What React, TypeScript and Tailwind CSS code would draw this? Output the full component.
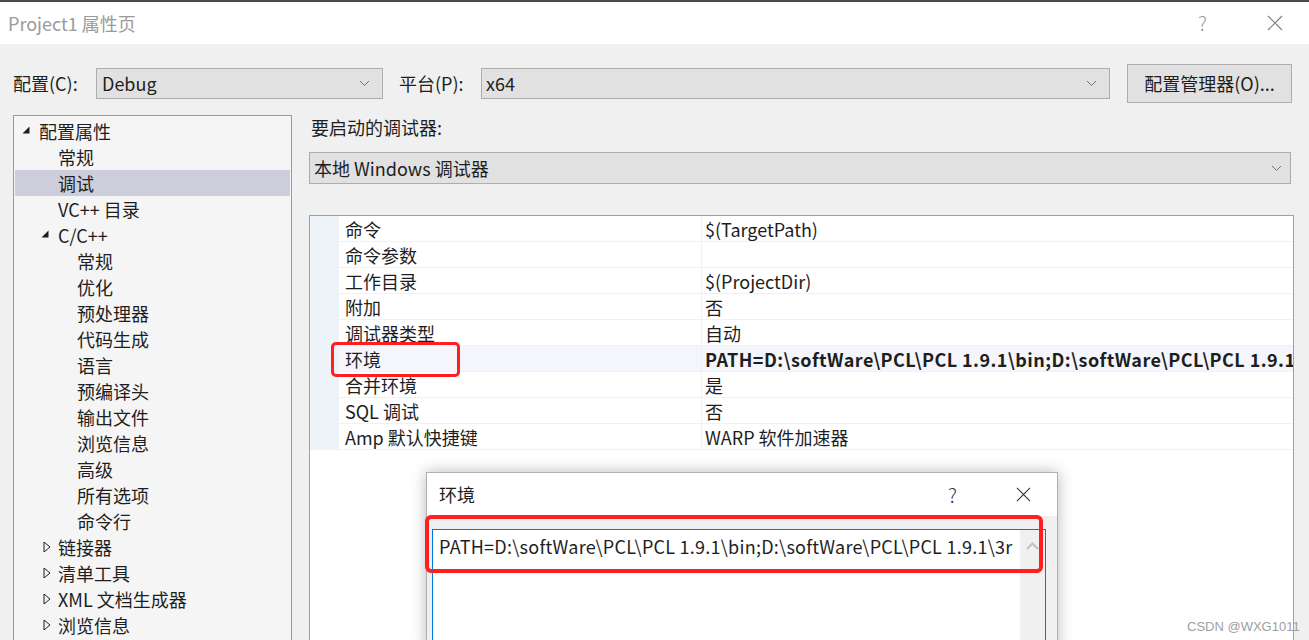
import React from "react"

const font = "font-['Noto_Sans_CJK_SC','Noto_Sans',sans-serif]"

type TreeItem = { label: string; level: 0 | 1 | 2; toggle?: "open" | "closed"; selected?: boolean }

const tree: TreeItem[] = [
  { label: "配置属性", level: 0, toggle: "open" },
  { label: "常规", level: 1 },
  { label: "调试", level: 1, selected: true },
  { label: "VC++ 目录", level: 1 },
  { label: "C/C++", level: 1, toggle: "open" },
  { label: "常规", level: 2 },
  { label: "优化", level: 2 },
  { label: "预处理器", level: 2 },
  { label: "代码生成", level: 2 },
  { label: "语言", level: 2 },
  { label: "预编译头", level: 2 },
  { label: "输出文件", level: 2 },
  { label: "浏览信息", level: 2 },
  { label: "高级", level: 2 },
  { label: "所有选项", level: 2 },
  { label: "命令行", level: 2 },
  { label: "链接器", level: 1, toggle: "closed" },
  { label: "清单工具", level: 1, toggle: "closed" },
  { label: "XML 文档生成器", level: 1, toggle: "closed" },
  { label: "浏览信息", level: 1, toggle: "closed" },
]

const props: { name: string; value: string; bold?: boolean }[] = [
  { name: "命令", value: "$(TargetPath)" },
  { name: "命令参数", value: "" },
  { name: "工作目录", value: "$(ProjectDir)" },
  { name: "附加", value: "否" },
  { name: "调试器类型", value: "自动" },
  { name: "环境", value: "PATH=D:\\softWare\\PCL\\PCL 1.9.1\\bin;D:\\softWare\\PCL\\PCL 1.9.1", bold: true },
  { name: "合并环境", value: "是" },
  { name: "SQL 调试", value: "否" },
  { name: "Amp 默认快捷键", value: "WARP 软件加速器" },
]

function Chevron({ className = "" }: { className?: string }) {
  return (
    <svg width="11" height="7" viewBox="0 0 11 7" className={className}>
      <path d="M1 1l4.5 4.5L10 1" fill="none" stroke="#707070" strokeWidth="1" />
    </svg>
  )
}

function CloseX({ size = 16, color = "#808080" }: { size?: number; color?: string }) {
  return (
    <svg width={size} height={size} viewBox="0 0 16 16">
      <path d="M1 1l14 14M15 1L1 15" stroke={color} strokeWidth="1.2" fill="none" />
    </svg>
  )
}

function Toggle({ kind }: { kind: "open" | "closed" }) {
  if (kind === "open") {
    return (
      <svg width="8" height="8" viewBox="0 0 8 8">
        <polygon points="7.5,0.5 7.5,7.5 0.5,7.5" fill="#1e1e1e" />
      </svg>
    )
  }
  return (
    <svg width="8" height="12" viewBox="0 0 8 12">
      <polygon points="1,1 7,6 1,11" fill="none" stroke="#1e1e1e" strokeWidth="1" />
    </svg>
  )
}

function TreeRow({ item }: { item: TreeItem }) {
  const indent = item.level === 0 ? "pl-[24px]" : item.level === 1 ? "pl-[43px]" : "pl-[62px]"
  return (
    <div className={`relative h-[26px] leading-[24px] flex items-center ${indent} ${item.selected ? "bg-[#cccedb]" : ""}`}>
      {item.toggle === "open" && (
        <span className={`absolute top-[8px] ${item.level === 0 ? "left-[7px]" : "left-[26px]"}`}>
          <Toggle kind="open" />
        </span>
      )}
      {item.toggle === "closed" && (
        <span className="absolute top-[7px] left-[28px]">
          <Toggle kind="closed" />
        </span>
      )}
      <span className="whitespace-nowrap">{item.label}</span>
    </div>
  )
}

export default function App() {
  return (
    <div className={`relative w-[1309px] h-[640px] overflow-hidden bg-[#f0f0f0] text-[18px] text-[#1e1e1e] ${font}`}>
      {/* window title */}
      <div className="h-[2px] bg-[#4a4a4a]" />
      <div className="h-[42px] bg-white flex items-center pl-[8px] pr-[26px]">
        <span className="text-[#9a9a9a] text-[18px]">Project1 属性页</span>
        <span className="ml-auto text-[#9a9a9a] text-[20px] font-light mr-[60px]">?</span>
        <CloseX />
      </div>

      {/* configuration bar */}
      <div className="flex items-center pt-[20px] h-[59px]">
        <span className="w-[96px] pl-[13px] whitespace-nowrap">配置(C):</span>
        <div className="w-[287px] h-[31px] bg-[#e1e1e1] border border-[#adadad] flex items-center pl-[5px] pr-[12px]">
          <span>Debug</span>
          <Chevron className="ml-auto" />
        </div>
        <span className="w-[98px] pl-[16px] whitespace-nowrap">平台(P):</span>
        <div className="w-[629px] h-[31px] bg-[#e1e1e1] border border-[#adadad] flex items-center pl-[4px] pr-[12px]">
          <span>x64</span>
          <Chevron className="ml-auto" />
        </div>
        <div className="ml-[17px] w-[165px] h-[39px] bg-[#e1e1e1] border border-[#adadad] flex items-center justify-center">
          配置管理器(O)...
        </div>
      </div>

      {/* main */}
      <div className="flex pt-[12px]">
        <div className="ml-[13px] w-[279px] h-[540px] bg-[#f5f5f5] border border-[#9a9a9a] pt-[2px] px-[1px]">
          {tree.map((t, i) => (
            <TreeRow key={i} item={t} />
          ))}
        </div>

        <div className="ml-[17px] flex-1 flex flex-col">
          <div className="h-[24px] leading-[24px] pl-[2px]">要启动的调试器:</div>
          <div className="mt-[13px] w-[982px] h-[32px] bg-[#e1e1e1] border border-[#adadad] flex items-center pl-[4px] pr-[8px]">
            <span>本地 Windows 调试器</span>
            <Chevron className="ml-auto" />
          </div>

          <div className="mt-[31px] w-[985px] h-[430px] bg-white border border-[#a0a0a0] border-b-0">
            {props.map((p, i) => (
              <div key={i} className="flex h-[26px] leading-[27px]">
                <div className="w-[29px] bg-[#eef2f9]" />
                <div className={`w-[362px] pl-[6px] border-b border-[#eef1f6] ${p.name === "环境" ? "bg-[#f4f6fb]" : ""}`}>
                  {p.name}
                </div>
                <div
                  className={`flex-1 pl-[3px] border-l border-b border-[#eef1f6] overflow-hidden whitespace-nowrap ${p.bold ? "font-bold bg-[#f4f6fb] tracking-[0.45px]" : ""}`}
                >
                  {p.value}
                </div>
              </div>
            ))}
          </div>
        </div>
      </div>

      {/* red highlight on 环境 row */}
      <div className="absolute left-[331px] top-[342px] w-[129px] h-[35px] border-[3px] border-[#ff1f1f] rounded-[5px]" />

      {/* 环境 dialog */}
      <div className="absolute left-[426px] top-[472px] w-[632px] h-[180px] bg-[#f0f0f0] border border-[#b0b0b0] shadow-[0_0_14px_rgba(0,0,0,0.28)] flex flex-col">
        <div className="h-[43px] bg-white flex items-center pl-[12px] pr-[26px]">
          <span>环境</span>
          <span className="ml-auto mr-[59px] text-[20px] font-light text-[#333]">?</span>
          <CloseX size={15} color="#333" />
        </div>
        <div className="mt-[13px] ml-[5px] w-[614px] flex-1 bg-white border border-[#0078d7] flex">
          <div className="flex-1 pl-[6px] pt-[3px] leading-[26px] whitespace-nowrap overflow-hidden tracking-[0.25px]">
            PATH=D:\softWare\PCL\PCL 1.9.1\bin;D:\softWare\PCL\PCL 1.9.1\3r
          </div>
          <div className="w-[25px] bg-[#f0f0f0] flex justify-center pt-[12px]">
            <svg width="13" height="8" viewBox="0 0 13 8">
              <path d="M1 7l5.5-5.5L12 7" fill="none" stroke="#c2c2c2" strokeWidth="2" />
            </svg>
          </div>
        </div>
      </div>

      {/* red highlight on text box */}
      <div className="absolute left-[425px] top-[515px] w-[618px] h-[58px] border-[4px] border-[#ff1f1f] rounded-[6px]" />

      <div className="absolute left-[1187px] top-[617px] text-[13px] text-[#a0a0a0] font-['Liberation_Sans',sans-serif]">
        CSDN @WXG1011
      </div>
    </div>
  )
}
